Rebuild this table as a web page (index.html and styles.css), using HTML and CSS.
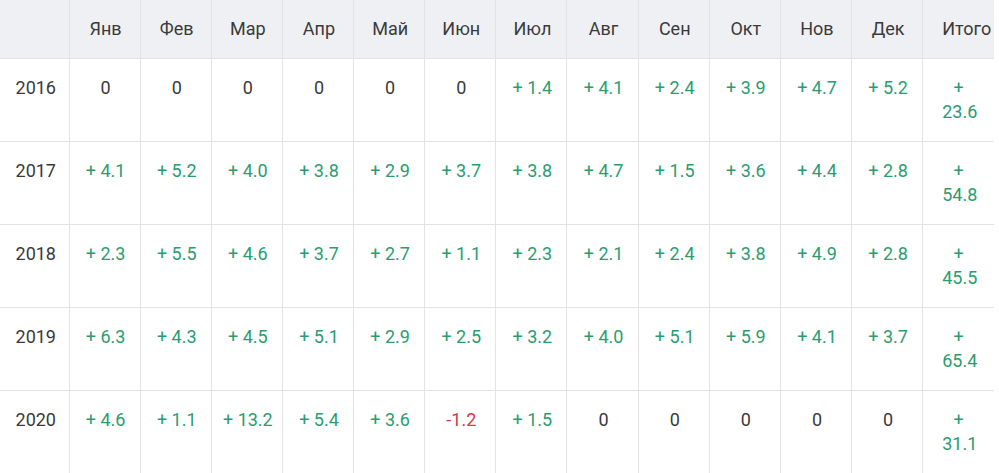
FILE: index.html
```html
<!DOCTYPE html>
<html lang="ru">
<head>
<meta charset="utf-8">
<link rel="stylesheet" href="styles.css">
</head>
<body>
<table class="returns">
  <colgroup><col class="c-year"><col span="13"></colgroup>
  <thead>
    <tr><th></th><th>Янв</th><th>Фев</th><th>Мар</th><th>Апр</th><th>Май</th><th>Июн</th><th>Июл</th><th>Авг</th><th>Сен</th><th>Окт</th><th>Нов</th><th>Дек</th><th class="total">Итого</th></tr>
  </thead>
  <tbody>
    <tr><td>2016</td><td>0</td><td>0</td><td>0</td><td>0</td><td>0</td><td>0</td><td class="pos">+ 1.4</td><td class="pos">+ 4.1</td><td class="pos">+ 2.4</td><td class="pos">+ 3.9</td><td class="pos">+ 4.7</td><td class="pos">+ 5.2</td><td class="pos total">+ 23.6</td></tr>
    <tr><td>2017</td><td class="pos">+ 4.1</td><td class="pos">+ 5.2</td><td class="pos">+ 4.0</td><td class="pos">+ 3.8</td><td class="pos">+ 2.9</td><td class="pos">+ 3.7</td><td class="pos">+ 3.8</td><td class="pos">+ 4.7</td><td class="pos">+ 1.5</td><td class="pos">+ 3.6</td><td class="pos">+ 4.4</td><td class="pos">+ 2.8</td><td class="pos total">+ 54.8</td></tr>
    <tr><td>2018</td><td class="pos">+ 2.3</td><td class="pos">+ 5.5</td><td class="pos">+ 4.6</td><td class="pos">+ 3.7</td><td class="pos">+ 2.7</td><td class="pos">+ 1.1</td><td class="pos">+ 2.3</td><td class="pos">+ 2.1</td><td class="pos">+ 2.4</td><td class="pos">+ 3.8</td><td class="pos">+ 4.9</td><td class="pos">+ 2.8</td><td class="pos total">+ 45.5</td></tr>
    <tr><td>2019</td><td class="pos">+ 6.3</td><td class="pos">+ 4.3</td><td class="pos">+ 4.5</td><td class="pos">+ 5.1</td><td class="pos">+ 2.9</td><td class="pos">+ 2.5</td><td class="pos">+ 3.2</td><td class="pos">+ 4.0</td><td class="pos">+ 5.1</td><td class="pos">+ 5.9</td><td class="pos">+ 4.1</td><td class="pos">+ 3.7</td><td class="pos total">+ 65.4</td></tr>
    <tr><td>2020</td><td class="pos">+ 4.6</td><td class="pos">+ 1.1</td><td class="pos">+ 13.2</td><td class="pos">+ 5.4</td><td class="pos">+ 3.6</td><td class="neg">-1.2</td><td class="pos">+ 1.5</td><td>0</td><td>0</td><td>0</td><td>0</td><td>0</td><td class="pos total">+ 31.1</td></tr>
  </tbody>
</table>
</body>
</html>
```
FILE: styles.css
```css
html, body {
  margin: 0;
  padding: 0;
  background: #fff;
}
body {
  font-family: Roboto, "Liberation Sans", sans-serif;
  font-size: 18px;
  line-height: 24px;
  color: #3a3a3a;
}
.returns {
  width: 994px;
  table-layout: fixed;
  border-collapse: collapse;
}
.returns .c-year {
  width: 69px;
}
.returns th,
.returns td {
  padding: 17px 0 17px 2px;
  text-align: center;
  vertical-align: top;
  font-weight: 400;
  white-space: nowrap;
  border-left: 1px solid #e3e3e3;
}
.returns th:first-child,
.returns td:first-child {
  border-left: none;
  padding-left: 3px;
}
.returns thead th {
  background: #eff0f3;
  border-bottom: 1px solid #e3e3e3;
}
.returns tbody tr {
  border-bottom: 1px solid #e3e3e3;
}
.returns .total {
  white-space: normal;
  padding-left: 19px;
  padding-right: 19px;
}
.pos {
  color: #2a9d70;
}
.neg {
  color: #dc3545;
}
```
